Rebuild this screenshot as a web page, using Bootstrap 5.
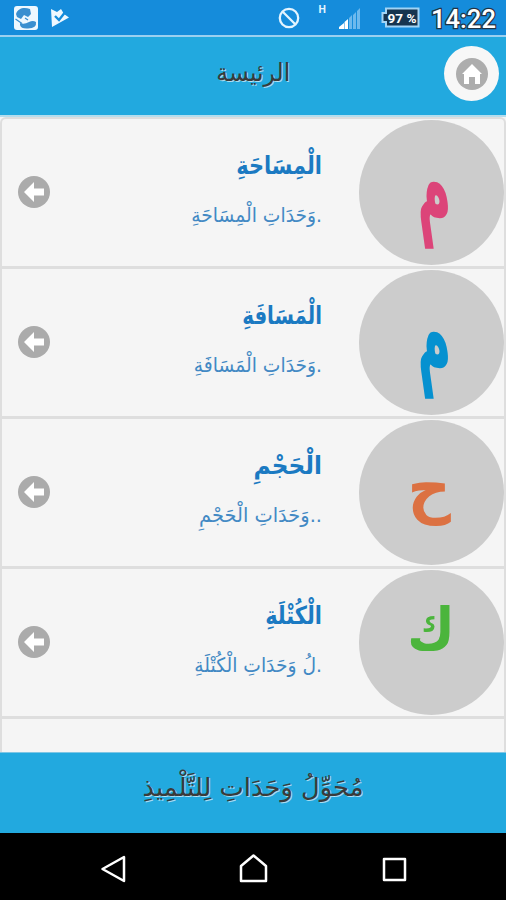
<!DOCTYPE html>
<html lang="ar" dir="rtl">
<head>
<meta charset="utf-8">
<meta name="viewport" content="width=device-width, initial-scale=1">
<title>الرئيسة</title>
<link href="https://cdn.jsdelivr.net/npm/bootstrap@5.3.0/dist/css/bootstrap.min.css" rel="stylesheet">
<style>
body{font-family:"DejaVu Sans","Liberation Sans",sans-serif;height:900px;overflow:hidden;background:#f5f5f5}
.statusbar{height:37px;background:#158cdb;border-bottom:2px solid #9bd0f0;flex:none}
.clock{font-family:Roboto,"Liberation Sans",sans-serif}
.topbar{height:80px;background:#22a9df;border-bottom:2px solid #b5dded;flex:none}
.topbar h1,.bottombar p{color:#3a3a3a;text-shadow:1px 1px 0 rgba(255,255,255,.6);white-space:nowrap;line-height:40px}
.topbar h1{font-size:25px;font-weight:400;transform:scaleX(.94)}
.bottombar p{font-size:25px;transform:scaleX(1.03)}
.homebtn{width:55px;height:55px;background:#f7f7f7;inset-inline-start:7px;top:9px}
.menu-list{border:2px solid #dedede;border-bottom:0;border-radius:6px 6px 0 0;background:#f5f5f5;height:635px;flex:none;overflow:hidden}
.menu-row{height:150px;border-bottom:3px solid #dedede}
.disc{width:145px;height:145px;background:#ccc;flex:none}
.disc span{font-size:70px;font-weight:700;line-height:1;display:block}
.letter-m{transform:translate(-1px,-8px) skewX(8deg) scale(.7,1.56)}
.letter-h{transform:translate(-2px,-5px) scale(.86,.93)}
.letter-k{transform:translate(0,-14px) scale(.74,.83)}
.pink{color:#dc4479}.azure{color:#0691d0}.orange{color:#dc7142}.leaf{color:#4bb53c}
.words{padding-inline-start:37px}
.words h2,.words p{white-space:nowrap;transform-origin:right}
.words h2{font-size:25px;font-weight:700;line-height:38px;margin:-8px 0 14px;color:#1b7ac2;transform:scaleX(.835)}
.words p{font-size:20px;line-height:32px;color:#4289c4;transform:scaleX(.935)}
.words .narrow{transform:scaleX(.79)}
.words .wide{transform:scaleX(.93)}
.words p.wide{transform:scaleX(.97)}
.go-arrow{margin-bottom:2px}
.bottombar{height:81px;background:#22a9df;flex:none;padding-top:15px;border-top:1px solid #7ec6e5}
.navkeys{height:67px;background:#000;flex:none}
</style>
<script src="https://cdn.jsdelivr.net/npm/bootstrap@5.3.0/dist/js/bootstrap.bundle.min.js"></script>
</head>
<body class="d-flex flex-column">
<div class="statusbar" dir="ltr">
<svg class="d-block" width="506" height="35" viewBox="0 0 506 35">
<rect x="14" y="6" width="24" height="24" rx="3" fill="#eef8ff"/>
<path d="M16 14C18 8 24 7 30 9L31 14 28 17 24 15 21 19 17 17ZM20 23Q24 25 29 22Q33 20 36 22Q37 28 28 28.500Q21 29 20 25Z" fill="#3a8fd0"/>
<path d="M15.500 19 22 23.500M25 18 28 20" stroke="#3a8fd0" stroke-width="1.300" fill="none"/>
<path d="M51 9 57 12 61 9 64 14 69 17.500 52 27Z" fill="#eef8ff"/>
<path d="M55 16 59 20 66 11" fill="none" stroke="#158cdb" stroke-width="2.400"/>
<circle cx="289" cy="18" r="9.200" fill="none" stroke="#e3f4ff" stroke-width="2.300"/>
<path d="M282.500 11.500 295.500 24.500" stroke="#e3f4ff" stroke-width="2.300"/>
<text class="clock" x="318.500" y="12.500" font-size="10.500" font-weight="700" fill="#e3f4ff">H</text>
<path d="M339 29V27L344 23V29ZM344.500 29V22L348 19V29Z" fill="#fff"/>
<path d="M349 29V18L352 15V29ZM353 29V15L356 12V29ZM357 29V11L360 8V29Z" fill="#6db9ed"/>
<path d="M386 8.500H418.500V26.500H386V22H382.500V13H386Z" fill="#16354f" stroke="#a2d4f5" stroke-width="2"/>
<text class="clock" x="387.500" y="22.500" font-size="13" font-weight="700" fill="#fff" textLength="29" lengthAdjust="spacingAndGlyphs">97 %</text>
<text class="clock" x="431" y="28" font-size="25.500" font-weight="500" fill="#fff" stroke="#234" stroke-width="2.500" paint-order="stroke" textLength="65" lengthAdjust="spacingAndGlyphs">14:22</text>
</svg>
</div>
<header class="topbar position-relative d-flex justify-content-center pt-3">
<h1 class="mb-0">الرئيسة</h1>
<a href="#" class="homebtn rounded-circle position-absolute d-flex align-items-center justify-content-center" aria-label="الرئيسة">
<svg width="32" height="32" viewBox="0 0 32 32"><circle cx="16" cy="16" r="16" fill="#adadad"/><path d="M16 6 6 16H8V26H13V19H19V26H24V16H26Z" fill="#fff"/></svg>
</a>
</header>
<main class="menu-list">
<section class="menu-row d-flex align-items-center">
<div class="disc rounded-circle d-flex align-items-center justify-content-center"><span class="letter-m pink">م</span></div>
<div class="words flex-grow-1"><h2>الْمِسَاحَةِ</h2><p class="mb-0">.وَحَدَاتِ الْمِسَاحَةِ</p></div>
<svg class="ms-3 go-arrow flex-shrink-0" width="32" height="32" viewBox="0 0 32 32"><circle cx="16" cy="16" r="16" fill="#ababab"/><path d="M6 16 16 6V12.500H26V19.500H16V26Z" fill="#fff"/></svg>
</section>
<section class="menu-row d-flex align-items-center">
<div class="disc rounded-circle d-flex align-items-center justify-content-center"><span class="letter-m azure">م</span></div>
<div class="words flex-grow-1"><h2 class="narrow">الْمَسَافَةِ</h2><p class="mb-0">.وَحَدَاتِ الْمَسَافَةِ</p></div>
<svg class="ms-3 go-arrow flex-shrink-0" width="32" height="32" viewBox="0 0 32 32"><circle cx="16" cy="16" r="16" fill="#ababab"/><path d="M6 16 16 6V12.500H26V19.500H16V26Z" fill="#fff"/></svg>
</section>
<section class="menu-row d-flex align-items-center">
<div class="disc rounded-circle d-flex align-items-center justify-content-center"><span class="letter-h orange">ح</span></div>
<div class="words flex-grow-1"><h2 class="wide">الْحَجْمِ</h2><p class="mb-0 wide">..وَحَدَاتِ الْحَجْمِ</p></div>
<svg class="ms-3 go-arrow flex-shrink-0" width="32" height="32" viewBox="0 0 32 32"><circle cx="16" cy="16" r="16" fill="#ababab"/><path d="M6 16 16 6V12.500H26V19.500H16V26Z" fill="#fff"/></svg>
</section>
<section class="menu-row d-flex align-items-center">
<div class="disc rounded-circle d-flex align-items-center justify-content-center"><span class="letter-k leaf">ك</span></div>
<div class="words flex-grow-1"><h2>الْكُتْلَةِ</h2><p class="mb-0">.لُ وَحَدَاتِ الْكُتْلَةِ</p></div>
<svg class="ms-3 go-arrow flex-shrink-0" width="32" height="32" viewBox="0 0 32 32"><circle cx="16" cy="16" r="16" fill="#ababab"/><path d="M6 16 16 6V12.500H26V19.500H16V26Z" fill="#fff"/></svg>
</section>
</main>
<footer class="bottombar text-center"><p class="mb-0">مُحَوِّلُ وَحَدَاتِ لِلتَّلْمِيذِ</p></footer>
<nav class="navkeys" dir="ltr">
<svg class="d-block" width="506" height="67" viewBox="0 0 506 67" fill="none" stroke="#fff" stroke-width="2.500" stroke-linejoin="round"><path d="M124 24V48L102.500 36ZM241 48V33L253.500 22.500 266 33V48Z"/><rect x="384" y="26" width="21" height="21"/></svg>
</nav>
</body>
</html>
